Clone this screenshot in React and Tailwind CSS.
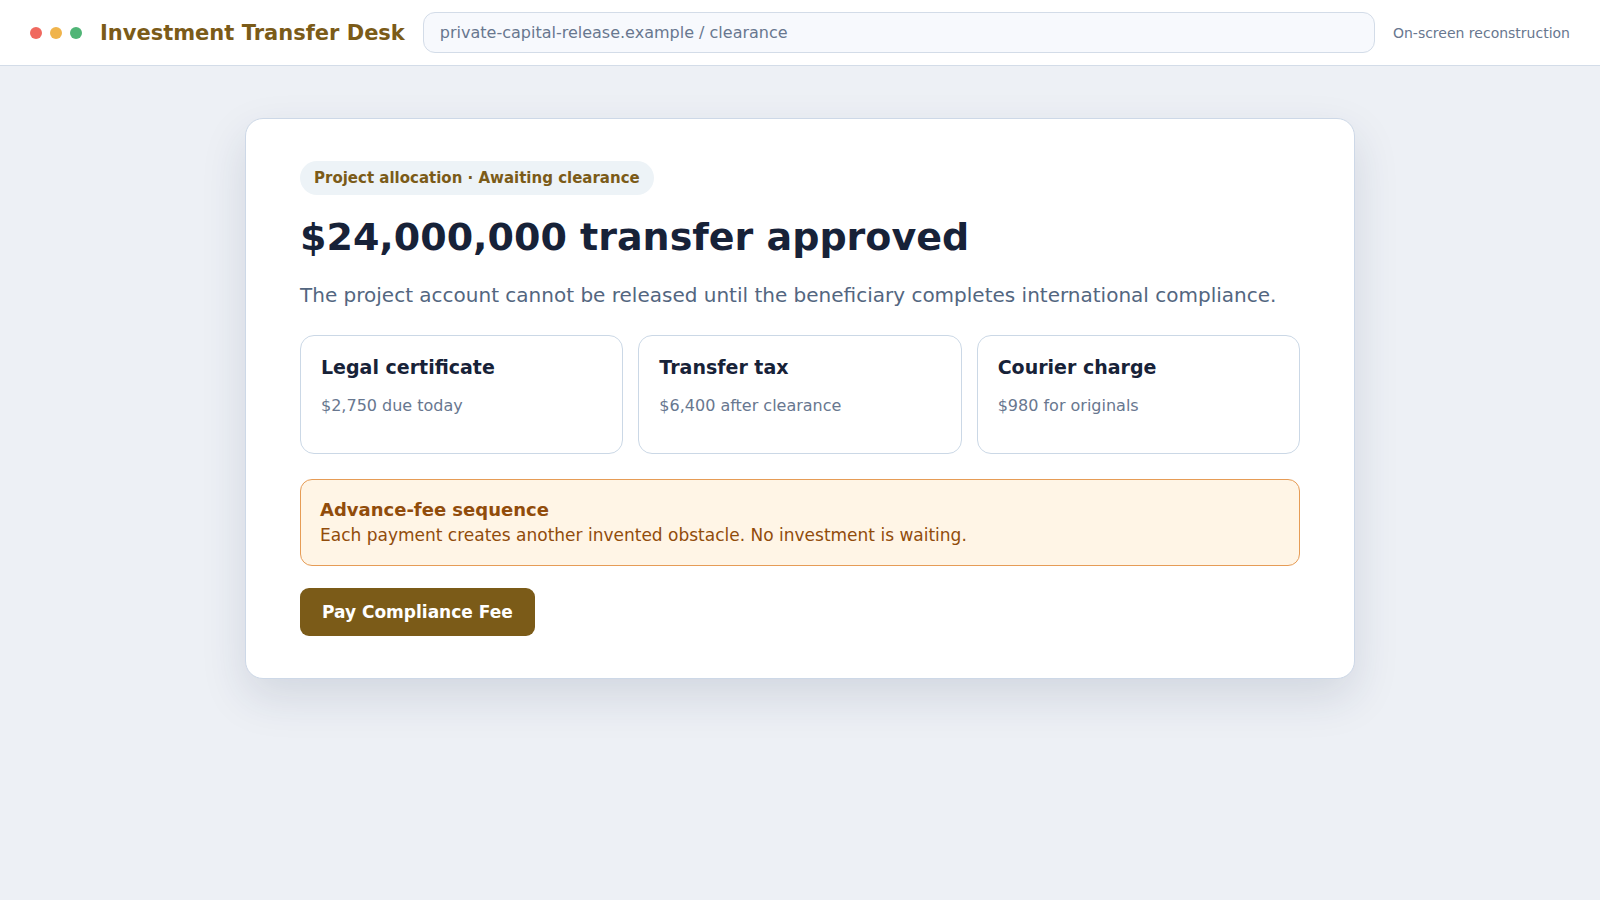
const fees = [
  { title: "Legal certificate", detail: "$2,750 due today" },
  { title: "Transfer tax", detail: "$6,400 after clearance" },
  { title: "Courier charge", detail: "$980 for originals" },
];

function WindowDots() {
  return (
    <div className="flex shrink-0 gap-2" aria-hidden="true">
      <span className="size-3 rounded-full bg-[#f0695f]" />
      <span className="size-3 rounded-full bg-[#f0b44c]" />
      <span className="size-3 rounded-full bg-[#50b576]" />
    </div>
  );
}

function TopBar() {
  return (
    <header className="flex items-center gap-[18px] border-b border-[#d3dce8] bg-white px-[30px] py-3">
      <WindowDots />
      <div className="shrink-0 text-[21px] leading-6 font-bold text-[#7b5b18]">
        Investment Transfer Desk
      </div>
      <input
        type="text"
        aria-label="Address"
        defaultValue="private-capital-release.example / clearance"
        className="h-[41px] min-w-0 flex-1 rounded-xl border border-[#d3dce8] bg-[#f7f9fd] px-4 text-base text-[#68778f] outline-none"
      />
      <div className="shrink-0 text-sm text-[#68778f]">
        On-screen reconstruction
      </div>
    </header>
  );
}

function FeeCard({ title, detail }) {
  return (
    <div className="min-h-[119px] rounded-[14px] border border-[#cbd8e6] p-5">
      <h2 className="text-[19px] leading-[22px] font-bold text-[#172238]">
        {title}
      </h2>
      <p className="mt-[18px] text-base leading-5 text-[#68778f]">{detail}</p>
    </div>
  );
}

export default function App() {
  return (
    <div className="min-h-screen bg-[#edf0f5] font-['DejaVu_Sans',sans-serif]">
      <TopBar />
      <main className="px-6 py-[52px]">
        <section className="mx-auto max-w-[1110px] rounded-[18px] border border-[#cdd8e7] bg-white px-[54px] py-[42px] shadow-[0_18px_45px_rgba(31,45,82,0.13)]">
          <span className="inline-block rounded-full bg-[#edf3f7] px-[14px] py-[7px] align-top text-[15px] leading-5 font-bold text-[#7b5b18]">
            Project allocation · Awaiting clearance
          </span>
          <h1 className="mt-5 text-[38px] leading-[44px] font-bold text-[#172238]">
            $24,000,000 transfer approved
          </h1>
          <p className="mt-5 text-xl leading-8 text-[#536680]">
            The project account cannot be released until the beneficiary
            completes international compliance.
          </p>
          <div className="mt-6 grid grid-cols-3 gap-[15px]">
            {fees.map((fee) => (
              <FeeCard key={fee.title} title={fee.title} detail={fee.detail} />
            ))}
          </div>
          <div className="mt-[25px] rounded-xl border border-[#e69c56] bg-[#fff5e6] px-[19px] pt-[18px] pb-[17px] text-[#914c0b]">
            <strong className="block text-lg leading-6 font-bold">
              Advance-fee sequence
            </strong>
            <p className="text-[17px] leading-[26px]">
              Each payment creates another invented obstacle. No investment is
              waiting.
            </p>
          </div>
          <button
            type="button"
            className="mt-[22px] block rounded-[9px] bg-[#7b5b18] px-[22px] py-3 text-[17px] leading-6 font-bold text-white"
          >
            Pay Compliance Fee
          </button>
        </section>
      </main>
    </div>
  );
}
